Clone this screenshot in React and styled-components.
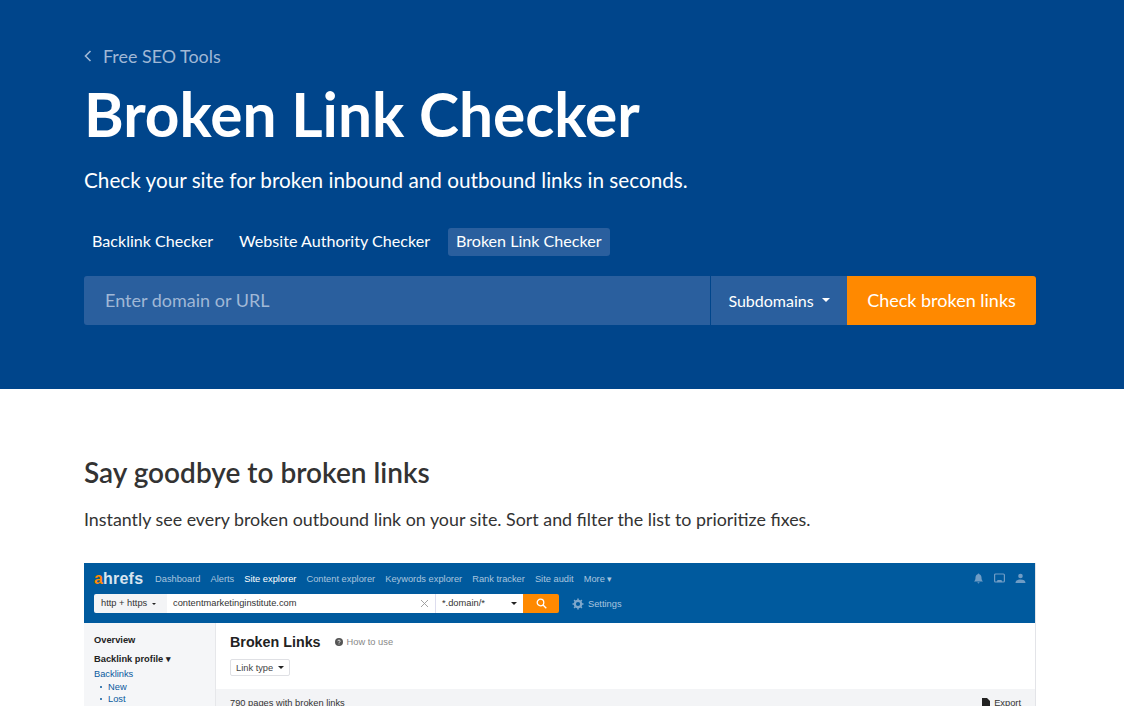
import React from 'react';
import styled, { createGlobalStyle } from 'styled-components';

const GlobalStyle = createGlobalStyle`
  html, body {
    margin: 0;
    padding: 0;
    background: #fff;
    overflow: hidden;
  }
  * {
    box-sizing: border-box;
  }
`;

const Page = styled.div`
  height: 706px;
  overflow: hidden;
  font-family: Lato, 'Open Sans', sans-serif;
  color: #333;
`;

const Hero = styled.header`
  height: 389px;
  background: #00458b;
  padding: 43px 88px 0 84px;
`;

const BackLink = styled.a`
  display: flex;
  align-items: center;
  gap: 11px;
  height: 26px;
  font-size: 17.9px;
  line-height: 26px;
  color: #a0b8d6;
`;

const Title = styled.h1`
  margin: 9px 0 0;
  font-size: 60.4px;
  line-height: 72px;
  font-weight: 700;
  color: #fff;
`;

const Lead = styled.p`
  margin: 15px 0 0;
  font-size: 20.73px;
  line-height: 30px;
  color: #fff;
`;

const Tabs = styled.nav`
  display: flex;
  gap: 10px;
  margin-top: 33px;
`;

const Tab = styled.a`
  height: 28px;
  padding: 0 8px;
  border-radius: 3px;
  font-size: 16.1px;
  line-height: 26px;
  color: #fff;
  background: ${p => (p.$active ? '#2a5f9e' : 'transparent')};
`;

const SearchRow = styled.div`
  display: flex;
  height: 49px;
  margin-top: 20px;
`;

const Field = styled.div`
  flex: 1;
  padding-left: 21px;
  border-radius: 3px 0 0 3px;
  background: #2a5f9e;
  font-size: 18px;
  line-height: 49px;
  color: #a0b8d6;
`;

const Scope = styled.div`
  display: flex;
  align-items: center;
  justify-content: center;
  gap: 8px;
  width: 136px;
  margin-left: 1px;
  padding-bottom: 1px;
  background: #2a5f9e;
  font-size: 16px;
  color: #fff;
`;

const Caret = styled.span`
  width: 0;
  height: 0;
  border-left: ${p => p.$size}px solid transparent;
  border-right: ${p => p.$size}px solid transparent;
  border-top: ${p => p.$size}px solid ${p => p.$color};
`;

const CheckButton = styled.button`
  width: 189px;
  padding: 0 0 2px;
  border: 0;
  border-radius: 0 3px 3px 0;
  background: #ff8900;
  font-family: inherit;
  font-size: 18px;
  color: #fff;
`;

const Content = styled.section`
  padding: 65px 88px 0 84px;
`;

const Heading = styled.h2`
  margin: 0;
  font-size: 28px;
  line-height: 36px;
  font-weight: 600;
  color: #333;
`;

const Text = styled.p`
  margin: 16px 0 0;
  font-size: 17.83px;
  line-height: 26px;
  color: #333;
`;

const Shot = styled.div`
  margin-top: 31px;
  height: 143px;
  overflow: hidden;
  border-right: 1px solid #e3e4e8;
  font-family: 'Liberation Sans', Arial, sans-serif;
  font-size: 9.3px;
`;

const ShotBar = styled.div`
  height: 60px;
  margin-right: -1px;
  padding: 0 10px;
  background: #005a9e;
`;

const ShotNavRow = styled.div`
  display: flex;
  align-items: center;
  height: 31px;
`;

const Logo = styled.div`
  width: 61px;
  font-size: 16px;
  font-weight: 700;
  letter-spacing: 0.2px;
  color: #d8e5f0;
`;

const LogoA = styled.span`
  color: #ff8900;
`;

const ShotNav = styled.div`
  display: flex;
  align-items: center;
  gap: 10px;
  flex: 1;
`;

const ShotNavItem = styled.span`
  color: ${p => (p.$active ? '#fff' : '#a9c5de')};
`;

const ShotIcons = styled.div`
  display: flex;
  align-items: center;
  gap: 10px;
  color: #6f9cc5;
`;

const ShotSearchRow = styled.div`
  display: flex;
  align-items: center;
`;

const ShotSearch = styled.div`
  display: flex;
  width: 465px;
  height: 19px;
  line-height: 19px;
  color: #333;
`;

const Protocol = styled.div`
  display: flex;
  align-items: center;
  gap: 5px;
  width: 73px;
  padding-left: 7px;
  border-radius: 2px 0 0 2px;
  background: #f3f4f6;
`;

const Target = styled.div`
  display: flex;
  align-items: center;
  justify-content: space-between;
  width: 268px;
  padding: 0 6px;
  background: #fff;
`;

const Mode = styled.div`
  display: flex;
  align-items: center;
  justify-content: space-between;
  width: 88px;
  padding: 0 6px;
  border-left: 1px solid #dde;
  background: #fff;
`;

const SearchButton = styled.div`
  display: flex;
  align-items: center;
  justify-content: center;
  width: 36px;
  border-radius: 0 2px 2px 0;
  background: #ff8900;
`;

const Settings = styled.div`
  display: flex;
  align-items: center;
  gap: 4px;
  margin-left: 13px;
  color: #a9c5de;
`;

const ShotBody = styled.div`
  display: flex;
  height: 83px;
`;

const Sidebar = styled.aside`
  width: 132px;
  padding: 8px 10px 0;
  border-right: 1px solid #e6e7ea;
  background: #f5f6f8;
`;

const SideItem = styled.div`
  display: flex;
  align-items: center;
  gap: 3px;
  height: ${p => p.$h}px;
  padding-left: ${p => (p.$sub ? 6 : 0)}px;
  font-weight: ${p => (p.$bold ? 700 : 400)};
  color: ${p => (p.$bold ? '#222' : '#0a5a9e')};
`;

const SubDot = styled.span`
  width: 2px;
  height: 2px;
  margin-right: 3px;
  border-radius: 50%;
  background: #0a5a9e;
`;

const Main = styled.div`
  flex: 1;
  display: flex;
  flex-direction: column;
`;

const MainHead = styled.div`
  flex: none;
  height: 66px;
  padding: 10px 14px 0;
`;

const TitleRow = styled.div`
  display: flex;
  align-items: center;
  height: 18px;
`;

const ShotTitle = styled.div`
  font-size: 14.3px;
  font-weight: 700;
  color: #222;
`;

const Help = styled.div`
  display: flex;
  align-items: center;
  gap: 4px;
  margin-left: 14px;
  color: #888;
`;

const Filter = styled.div`
  display: inline-flex;
  align-items: center;
  gap: 5px;
  height: 17px;
  margin-top: 8px;
  padding: 0 5px;
  border: 1px solid #dfe0e4;
  border-radius: 2px;
  color: #444;
`;

const Summary = styled.div`
  flex: 1;
  min-height: 0;
  display: flex;
  justify-content: space-between;
  padding: 9px 14px 0;
  background: #f3f4f6;
  color: #333;
`;

const ExportLabel = styled.span`
  display: flex;
  align-items: flex-start;
  gap: 4px;
`;

const navItems = ['Dashboard', 'Alerts', 'Site explorer', 'Content explorer', 'Keywords explorer', 'Rank tracker', 'Site audit'];

const App = () => (
  <Page>
    <GlobalStyle />
    <Hero>
      <BackLink>
        <svg width="8" height="12" viewBox="0 0 8 12" fill="none" stroke="#a0b8d6" strokeWidth="1.6">
          <path d="M6.5 1L1.5 6l5 5" />
        </svg>
        Free SEO Tools
      </BackLink>
      <Title>Broken Link Checker</Title>
      <Lead>Check your site for broken inbound and outbound links in seconds.</Lead>
      <Tabs>
        <Tab>Backlink Checker</Tab>
        <Tab>Website Authority Checker</Tab>
        <Tab $active>Broken Link Checker</Tab>
      </Tabs>
      <SearchRow>
        <Field>Enter domain or URL</Field>
        <Scope>
          Subdomains
          <Caret $size={4} $color="#fff" />
        </Scope>
        <CheckButton>Check broken links</CheckButton>
      </SearchRow>
    </Hero>
    <Content>
      <Heading>Say goodbye to broken links</Heading>
      <Text>Instantly see every broken outbound link on your site. Sort and filter the list to prioritize fixes.</Text>
      <Shot>
        <ShotBar>
          <ShotNavRow>
            <Logo><LogoA>a</LogoA>hrefs</Logo>
            <ShotNav>
              {navItems.map(item => (
                <ShotNavItem key={item} $active={item === 'Site explorer'}>{item}</ShotNavItem>
              ))}
              <ShotNavItem>More ▾</ShotNavItem>
            </ShotNav>
            <ShotIcons>
              <svg width="11" height="11" viewBox="0 0 11 11" fill="currentColor">
                <path d="M5.5 0.5c-.5 0-.8.3-.8.8C3.2 1.7 2.5 3 2.5 4.5c0 2-.5 3-1.5 4h9c-1-1-1.500-2-1.500-4 0-1.500-.7-2.800-2.200-3.200 0-.5-.3-.8-.8-.8zM4.500 9.300h2c0 .6-.4 1.200-1 1.200s-1-.6-1-1.200z" />
              </svg>
              <svg width="11" height="11" viewBox="0 0 11 11" fill="none" stroke="currentColor" strokeWidth="1.200">
                <rect x="0.600" y="1" width="9.800" height="8" rx="1" />
                <path d="M3 9l1-1.500h3L8 9" fill="currentColor" />
              </svg>
              <svg width="11" height="11" viewBox="0 0 11 11" fill="currentColor">
                <circle cx="5.500" cy="3" r="2.300" />
                <path d="M0.500 10c0-2.500 2-3.500 5-3.500s5 1 5 3.500z" />
              </svg>
            </ShotIcons>
          </ShotNavRow>
          <ShotSearchRow>
            <ShotSearch>
              <Protocol>http + https <Caret $size={2.500} $color="#222" /></Protocol>
              <Target>
                contentmarketinginstitute.com
                <svg width="9" height="9" viewBox="0 0 9 9" stroke="#999" strokeWidth="0.900">
                  <path d="M1 1l7 7M8 1L1 8" />
                </svg>
              </Target>
              <Mode>*.domain/* <Caret $size={3} $color="#222" /></Mode>
              <SearchButton>
                <svg width="11" height="11" viewBox="0 0 11 11" fill="none" stroke="#fff" strokeWidth="1.300">
                  <circle cx="4.500" cy="4.500" r="3.300" />
                  <path d="M7 7l3.300 3.300" />
                </svg>
              </SearchButton>
            </ShotSearch>
            <Settings>
              <svg width="12" height="12" viewBox="0 0 12 12" fill="none" stroke="#7fa8cc" strokeWidth="2.200">
                <circle cx="6" cy="6" r="3.200" />
                <path strokeWidth="1.500" d="M6 .5v2M6 9.500v2M.5 6h2M9.500 6h2M2.100 2.100l1.400 1.400M8.500 8.500l1.400 1.400M2.100 9.900l1.400-1.400M8.500 3.500l1.400-1.400" />
              </svg>
              Settings
            </Settings>
          </ShotSearchRow>
        </ShotBar>
        <ShotBody>
          <Sidebar>
            <SideItem $bold $h={18}>Overview</SideItem>
            <SideItem $bold $h={18}>Backlink profile ▾</SideItem>
            <SideItem $h={13}>Backlinks</SideItem>
            <SideItem $sub $h={13}><SubDot />New</SideItem>
            <SideItem $sub $h={12}><SubDot />Lost</SideItem>
          </Sidebar>
          <Main>
            <MainHead>
              <TitleRow>
                <ShotTitle>Broken Links</ShotTitle>
                <Help>
                  <svg width="8" height="8" viewBox="0 0 8 8">
                    <circle cx="4" cy="4" r="4" fill="#555" />
                    <path d="M2.800 3.200c0-1.500 2.400-1.500 2.400 0 0 .8-1.200.8-1.200 1.600M4 5.600v.8" stroke="#fff" strokeWidth="0.800" fill="none" />
                  </svg>
                  How to use
                </Help>
              </TitleRow>
              <Filter>Link type <Caret $size={3} $color="#222" /></Filter>
            </MainHead>
            <Summary>
              790 pages with broken links
              <ExportLabel>
                <svg width="8" height="10" viewBox="0 0 8 10" fill="#222">
                  <path d="M0 0h5l3 3v7H0z" />
                </svg>
                Export
              </ExportLabel>
            </Summary>
          </Main>
        </ShotBody>
      </Shot>
    </Content>
  </Page>
);

export default App;
